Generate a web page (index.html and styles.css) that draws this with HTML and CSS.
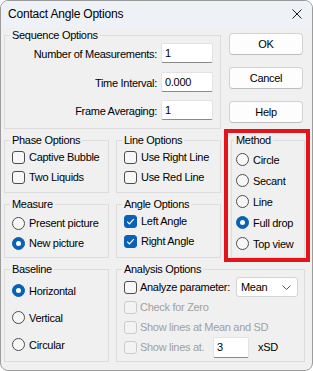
FILE: index.html
```html
<!DOCTYPE html>
<html lang="en">
<head>
  <meta charset="UTF-8">
  <title>Contact Angle Options</title>
  <link rel="stylesheet" href="styles.css">
</head>
<body>
  <div class="window">
    <div class="titlebar">
      <span class="title">Contact Angle Options</span>
      <svg class="close" width="10" height="10" viewBox="0 0 10 10">
        <path d="M0.5 0.5 L9.5 9.5 M9.5 0.5 L0.5 9.5" stroke="#1a1a1a" stroke-width="1" fill="none"/>
      </svg>
    </div>

    <div class="content">
      <!-- Sequence -->
      <fieldset class="group seq">
        <legend>Sequence Options</legend>
        <div class="field"><span class="lbl">Number of Measurements:</span><span class="edit">1</span></div>
        <div class="field"><span class="lbl">Time Interval:</span><span class="edit">0.000</span></div>
        <div class="field"><span class="lbl">Frame Averaging:</span><span class="edit">1</span></div>
      </fieldset>

      <div class="buttons">
        <div class="btn">OK</div>
        <div class="btn">Cancel</div>
        <div class="btn">Help</div>
      </div>

      <fieldset class="group phase">
        <legend>Phase Options</legend>
        <div class="opt"><span class="box"></span>Captive Bubble</div>
        <div class="opt"><span class="box"></span>Two Liquids</div>
      </fieldset>

      <fieldset class="group lines">
        <legend>Line Options</legend>
        <div class="opt"><span class="box"></span>Use Right Line</div>
        <div class="opt"><span class="box"></span>Use Red Line</div>
      </fieldset>

      <div class="highlight">
        <fieldset class="group method">
          <legend>Method</legend>
          <div class="opt"><span class="radio"></span>Circle</div>
          <div class="opt"><span class="radio"></span>Secant</div>
          <div class="opt"><span class="radio"></span>Line</div>
          <div class="opt"><span class="radio on"></span>Full drop</div>
          <div class="opt"><span class="radio"></span>Top view</div>
        </fieldset>
      </div>

      <fieldset class="group measure">
        <legend>Measure</legend>
        <div class="opt"><span class="radio"></span>Present picture</div>
        <div class="opt"><span class="radio on"></span>New picture</div>
      </fieldset>

      <fieldset class="group angle">
        <legend>Angle Options</legend>
        <div class="opt"><span class="box on"><svg width="13" height="13" viewBox="0 0 13 13"><path d="M3.2 6.6 L5.4 8.8 L9.8 4.2" stroke="#fff" stroke-width="1.2" fill="none"/></svg></span>Left Angle</div>
        <div class="opt"><span class="box on"><svg width="13" height="13" viewBox="0 0 13 13"><path d="M3.2 6.6 L5.4 8.8 L9.8 4.2" stroke="#fff" stroke-width="1.2" fill="none"/></svg></span>Right Angle</div>
      </fieldset>

      <fieldset class="group baseline">
        <legend>Baseline</legend>
        <div class="opt"><span class="radio on"></span>Horizontal</div>
        <div class="opt"><span class="radio"></span>Vertical</div>
        <div class="opt"><span class="radio"></span>Circular</div>
      </fieldset>

      <fieldset class="group analysis">
        <legend>Analysis Options</legend>
        <div class="opt"><span class="box"></span><span class="wide">Analyze parameter:</span>
          <div class="dropdown">Mean
            <svg width="9" height="5" viewBox="0 0 9 5"><path d="M0.5 0.5 L4.5 4.5 L8.5 0.5" stroke="#555" stroke-width="1" fill="none"/></svg>
          </div>
        </div>
        <div class="opt off"><span class="box"></span>Check for Zero</div>
        <div class="opt off"><span class="box"></span>Show lines at Mean and SD</div>
        <div class="opt off"><span class="box"></span><span class="short">Show lines at.</span><span class="edit small">3</span><span class="unit">xSD</span></div>
      </fieldset>
    </div>
  </div>
</body>
</html>
```

FILE: styles.css
```css
* {
  box-sizing: border-box;
}

html, body {
  margin: 0;
  padding: 0;
}

body {
  background: #ffffff;
  font-family: "Liberation Sans", Arial, sans-serif;
  font-size: 11px;
  letter-spacing: -0.3px;
  color: #000;
}

.window {
  width: 313px;
  height: 371px;
  border: 1px solid #9c9c9c;
  border-radius: 8px;
  background: #f0f0f0;
  overflow: hidden;
}

/* Title bar */
.titlebar {
  height: 26px;
  background: #eef2f7;
  display: flex;
  align-items: center;
  justify-content: space-between;
  padding: 0 10px 0 7px;
  font-size: 12px;
  letter-spacing: -0.2px;
}

/* Main grid */
.content {
  display: grid;
  grid-template-columns: 105px 105px 77px;
  grid-template-rows: 100px 59px 60px 99px;
  column-gap: 7px;
  row-gap: 5px;
  padding: 2px 0 0 3px;
}

.group {
  margin: 0;
  border: 1px solid #dcdcdc;
  padding: 0 6px 0 7px;
  min-width: 0;
  display: flex;
  flex-direction: column;
}

.group legend {
  padding: 0 2px;
  margin-left: -2px;
  line-height: 13px;
}

.seq {
  grid-column: 1 / 3;
  grid-row: 1;
  padding-top: 1px;
  padding-right: 7px;
  gap: 8.5px;
}

.field {
  display: flex;
  align-items: center;
  height: 20px;
}

.field .lbl {
  flex: 1;
  text-align: right;
  padding-right: 4px;
  padding-top: 2px;
}

.edit {
  width: 52px;
  height: 20px;
  background: #fff;
  border: 1px solid #e3e3e3;
  border-bottom-color: #8a8a8a;
  border-radius: 2px;
  padding: 3px 0 0 3px;
}

.edit.small {
  width: 36px;
  height: 21px;
  margin-left: 0;
}

/* Buttons */
.buttons {
  grid-column: 3;
  grid-row: 1;
  display: flex;
  flex-direction: column;
  gap: 12px;
  padding: 4px 0 0 1px;
}

.btn {
  width: 74px;
  height: 22px;
  background: #fdfdfd;
  border: 1px solid #d2d2d2;
  border-bottom-color: #bdbdbd;
  border-radius: 4px;
  display: flex;
  align-items: center;
  justify-content: center;
}

/* Options rows */
.opt {
  display: flex;
  align-items: center;
  height: 20px;
  white-space: nowrap;
}

.box, .radio {
  flex: none;
  width: 13px;
  height: 13px;
  margin-right: 4px;
  border: 1px solid #4d4d4d;
  background: #f7f7f7;
}

.box {
  border-radius: 3px;
}

.box svg {
  display: block;
  margin: -1px;
}

.box.on {
  background: #0a62b7;
  border-color: #0a62b7;
}

.radio {
  border-radius: 50%;
  position: relative;
}

.radio.on {
  background: #0a62b7;
  border-color: #0a62b7;
}

.radio.on::after {
  content: "";
  position: absolute;
  left: 3px;
  top: 3px;
  width: 5px;
  height: 5px;
  border-radius: 50%;
  background: #fff;
}

.phase, .lines {
  grid-row: 2;
}

.phase { grid-column: 1; }
.lines { grid-column: 2; }

.measure, .angle {
  grid-row: 3;
}

.measure { grid-column: 1; padding-top: 2px; }
.angle { grid-column: 2; }

.baseline {
  grid-column: 1;
  grid-row: 4;
  padding-top: 1px;
}

.baseline .opt {
  height: 27px;
}

/* Method, highlighted in red */
.highlight {
  grid-column: 3;
  grid-row: 2 / 4;
  margin: -5px -5px -4px -4px;
  border: 4px solid #e3151a;
  display: flex;
}

.method {
  flex: 1;
  margin: 1px 1px 0 3px;
  padding-left: 4px;
  padding-top: 2px;
}

.method .opt {
  height: 21px;
}

/* Analysis */
.analysis {
  grid-column: 2 / 4;
  grid-row: 4;
  padding-top: 1px;
}

.analysis .box {
  margin-right: 3px;
}

.wide {
  width: 96px;
}

.short {
  width: 73px;
}

.dropdown {
  width: 62px;
  height: 20px;
  background: #fff;
  border: 1px solid #d4d4d4;
  border-radius: 3px;
  display: flex;
  align-items: center;
  justify-content: space-between;
  padding: 0 6px 0 4px;
}

.opt.off {
  color: #a0a0a0;
}

.opt.off .box {
  border-color: #cbcbcb;
  background: #f3f3f3;
}

.opt.off .edit {
  color: #000;
}

.unit {
  margin-left: 9px;
  color: #000;
}
```
